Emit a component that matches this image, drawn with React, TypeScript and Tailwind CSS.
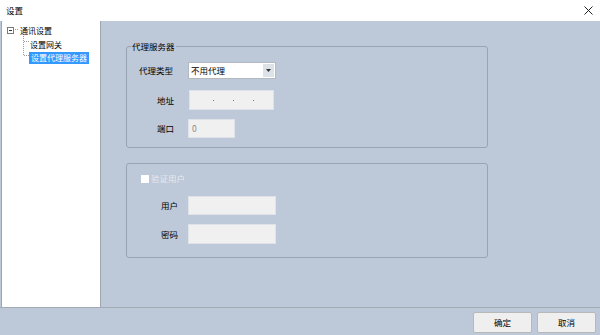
const font = "font-['Microsoft_YaHei','Noto_Sans_CJK_SC',sans-serif]";

function TreeLines() {
  return (
    <svg className="absolute left-0 top-0" width="40" height="70" viewBox="0 0 40 70">
      <g stroke="#9a9a9a" strokeWidth="1" strokeDasharray="1 1" shapeRendering="crispEdges">
        <line x1="21.5" y1="13" x2="21.5" y2="35" />
        <line x1="22" y1="20.5" x2="27" y2="20.5" />
        <line x1="22" y1="34.5" x2="27" y2="34.5" />
        <line x1="13" y1="8.5" x2="17" y2="8.5" />
      </g>
    </svg>
  );
}

function GroupBox({ title, children, className }: { title?: string; children: React.ReactNode; className?: string }) {
  return (
    <div className={`relative w-[362px] border border-[#98a4b5] rounded-[3px] ${className ?? ''}`}>
      {title && (
        <span className="absolute -top-[7px] left-[4px] px-[1px] bg-[#bdc8d8] leading-[12px]">{title}</span>
      )}
      {children}
    </div>
  );
}

function Field({ w, h, children }: { w: number; h: number; children?: React.ReactNode }) {
  return (
    <div
      className="bg-[#f0f0f0] border border-[#dfe3e8] flex items-center text-[#8a8a8a]"
      style={{ width: w, height: h }}
    >
      {children}
    </div>
  );
}

export default function App() {
  return (
    <div className={`w-[600px] h-[335px] flex flex-col bg-[#bdc8d8] text-[8.5px] text-black overflow-hidden ${font}`}>
      {/* title bar */}
      <div className="h-[21px] shrink-0 bg-white flex items-center justify-between pl-[6px] pr-[7px]">
        <span className="leading-none">设置</span>
        <svg width="9" height="9" viewBox="0 0 9 9">
          <path d="M0.5 0.5 L8.5 8.5 M8.5 0.5 L0.5 8.5" stroke="#222" strokeWidth="1" />
        </svg>
      </div>

      {/* body */}
      <div className="flex flex-1 min-h-0 border-b border-[#a3abb6]">
        <div className="relative w-[100px] ml-px bg-white border-l border-r border-[#a0a5ad] pt-[3px] text-[8px]">
          <TreeLines />
          <div className="relative flex items-center h-[13px] pl-[5px]">
            <span className="w-[7px] h-[7px] border border-[#7a7a7a] flex items-center justify-center mr-[6px]">
              <span className="w-[3px] h-px bg-[#333]" />
            </span>
            <span>通讯设置</span>
          </div>
          <div className="relative flex items-center h-[13px] pl-[28px] mt-px">
            <span>设置网关</span>
          </div>
          <div className="relative flex items-center h-[13px] pl-[27px]">
            <span className="bg-[#3399ff] text-white px-[2px] h-[12px] flex items-center">设置代理服务器</span>
          </div>
        </div>

        <div className="flex-1 pl-[25px] pt-[25px] flex flex-col gap-[15px]">
          <GroupBox title="代理服务器" className="h-[102px] pt-[15px]">
            <div className="flex items-center h-[17px]">
              <span className="ml-[12px] w-[49px]">代理类型</span>
              <div className="w-[88px] h-[17px] bg-white border border-[#b4b9c0] flex items-center justify-between">
                <span className="pl-[2px]">不用代理</span>
                <span className="w-[11px] h-[13px] mr-px bg-[#dde1e8] flex items-center justify-center">
                  <svg width="5" height="3" viewBox="0 0 5 3"><path d="M0 0 H5 L2.5 3 Z" fill="#333" /></svg>
                </span>
              </div>
            </div>
            <div className="flex items-center h-[20px] mt-[11px]">
              <span className="ml-[30px] w-[32px]">地址</span>
              <Field w={85} h={20}>
                <span className="ml-[23px] w-px h-px bg-[#7a7a7a]" />
                <span className="ml-[19px] w-px h-px bg-[#7a7a7a]" />
                <span className="ml-[19px] w-px h-px bg-[#7a7a7a]" />
              </Field>
            </div>
            <div className="flex items-center h-[19px] mt-[9px]">
              <span className="ml-[30px] w-[31px]">端口</span>
              <Field w={47} h={19}>
                <span className="ml-[3px]">0</span>
              </Field>
            </div>
          </GroupBox>

          <GroupBox className="h-[95px] pt-[10px]">
            <div className="flex items-center h-[9px] ml-[14px]">
              <span className="w-[8px] h-[8px] bg-white" />
              <span className="ml-[2px] text-[#e6eaf0]">验证用户</span>
            </div>
            <div className="flex items-center h-[19px] mt-[13px]">
              <span className="ml-[34px] w-[27px]">用户</span>
              <Field w={88} h={19} />
            </div>
            <div className="flex items-center h-[20px] mt-[9px]">
              <span className="ml-[34px] w-[27px]">密码</span>
              <Field w={88} h={20} />
            </div>
          </GroupBox>
        </div>
      </div>

      {/* footer */}
      <div className="h-[27px] shrink-0 flex items-center justify-end gap-[5px] pr-[4px] pt-px">
        <button className="w-[59px] h-[21px] bg-[#efefef] border border-[#b8b8b8] rounded-[2px] leading-none">确定</button>
        <button className="w-[59px] h-[21px] bg-[#efefef] border border-[#b8b8b8] rounded-[2px] leading-none">取消</button>
      </div>
    </div>
  );
}
